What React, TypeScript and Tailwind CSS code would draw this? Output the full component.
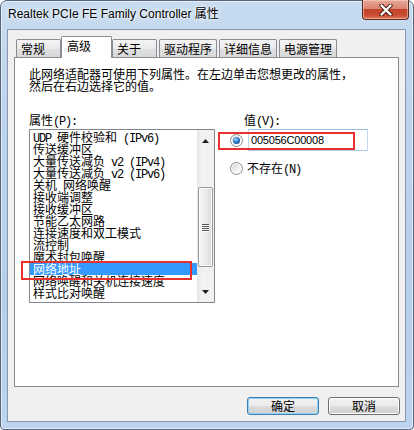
import React from "react";

function Mixed({ text }: { text: string }) {
  const parts = text.split(/([\x20-\x7E]+)/).filter((p) => p.length > 0);
  return (
    <>
      {parts.map((p, i) =>
        /^[\x20-\x7E]+$/.test(p) ? (
          <span key={i} className="font-['Liberation_Mono',monospace] text-[12px] tracking-[-1.2px] whitespace-pre">
            {p}
          </span>
        ) : (
          <span key={i}>{p}</span>
        )
      )}
    </>
  );
}

function Radio({ checked }: { checked?: boolean }) {
  return (
    <div className="w-[13px] h-[13px] shrink-0 rounded-full border border-[#8f8f8f] bg-[linear-gradient(135deg,#cfcfcf,#f4f4f4_60%,#ffffff)] shadow-[inset_0_0_0_1px_#fafafa] flex items-center justify-center">
      {checked && (
        <div className="w-[7px] h-[7px] rounded-full bg-[radial-gradient(circle_at_40%_35%,#9ad6ff,#2573c4_50%,#0d3a74)]" />
      )}
    </div>
  );
}

const items = [
  "UDP 硬件校验和 (IPv6)",
  "传送缓冲区",
  "大量传送减负 v2 (IPv4)",
  "大量传送减负 v2 (IPv6)",
  "关机 网络唤醒",
  "接收端调整",
  "接收缓冲区",
  "节能乙太网路",
  "连接速度和双工模式",
  "流控制",
  "魔术封包唤醒",
  "网络地址",
  "网络唤醒和关机连接速度",
  "样式比对唤醒",
];

const tabs = ["常规", "高级", "关于", "驱动程序", "详细信息", "电源管理"];
const tabW: Record<string, string> = {
  常规: "w-[45px]",
  关于: "w-[45px]",
  驱动程序: "w-[58px]",
  详细信息: "w-[58px]",
  电源管理: "w-[58px]",
};

export default function App() {
  return (
    <div className="w-[414px] h-[430px] bg-white overflow-hidden font-['Noto_Sans_CJK_SC',sans-serif] text-black">
      <div className="relative w-[414px] h-[430px] rounded-t-[7px] rounded-b-[4px] border border-[#56657a] bg-[linear-gradient(180deg,#c7dbf0,#bcd3ec_30%,#b6cfea_70%,#bcd4ed)] shadow-[inset_0_0_0_1px_rgba(255,255,255,0.55)] flex flex-col pl-[6px] pr-[7px]">
        <div className="h-[28px] flex items-center pl-[1px] pb-[2px]">
          <span className="font-['Liberation_Sans','Noto_Sans_CJK_SC',sans-serif] text-[12px] leading-[14px] whitespace-nowrap [text-shadow:0_0_6px_#ffffff,0_0_3px_#ffffff]">
            Realtek PCIe FE Family Controller 属性
          </span>
        </div>
        <div className="absolute top-[-1px] right-[4px] w-[47px] h-[20px] rounded-b-[4px] border border-[#5b2a22] border-t-0 bg-[linear-gradient(180deg,#e9a898,#d98672_45%,#c2432a_50%,#c94c32_80%,#e07a58)] shadow-[inset_0_0_0_1px_rgba(255,220,210,0.5)] flex items-center justify-center">
          <svg width="14" height="12" viewBox="0 0 14 12">
            <path d="M2.5 1.5 L11.5 10.5 M11.5 1.5 L2.5 10.5" stroke="#4a1a12" strokeWidth="4.2" strokeLinecap="round" />
            <path d="M2.5 1.5 L11.5 10.5 M11.5 1.5 L2.5 10.5" stroke="#ffffff" strokeWidth="2.4" strokeLinecap="round" />
          </svg>
        </div>

        <div className="w-[399px] h-[393px] border border-[#8897ac] bg-[#f0f0f0] flex flex-col">
          <div className="mt-[6px] h-[21px] flex items-end gap-[2px] pl-[8px] relative z-10">
            {tabs.map((t) =>
              t === "高级" ? (
                <div
                  key={t}
                  className="w-[51px] h-[22px] mx-[-2px] mb-[-1px] rounded-t-[2px] border border-b-0 border-[#898c95] bg-white pl-[5px] pt-[2px] text-[12px] leading-[14px]"
                >
                  {t}
                </div>
              ) : (
                <div
                  key={t}
                  className={`${tabW[t]} h-[18px] rounded-t-[2px] border border-b-0 border-[#898c95] bg-[linear-gradient(180deg,#f4f4f4,#ebebeb_50%,#e0e0e0_51%,#d9d9d9)] pl-[4px] pt-[2px] text-[12px] leading-[14px]`}
                >
                  {t}
                </div>
              )
            )}
          </div>

          <div className="relative ml-[6px] w-[385px] h-[330px] border border-[#898c95] bg-white pl-[14px] pt-[10px]">
            <div className="text-[12px] leading-[12px] whitespace-nowrap">
              此网络适配器可使用下列属性。在左边单击您想更改的属性，
              <br />
              然后在右边选择它的值。
            </div>

            <div className="mt-[22px] flex gap-[15px]">
              <div className="w-[186px] flex flex-col">
                <div className="h-[12px] text-[12px] leading-[12px] whitespace-nowrap">
                  <Mixed text="属性(P):" />
                </div>
                <div className="mt-[3px] w-[186px] h-[174px] border border-[#828790] bg-white flex">
                  <div className="flex-1 pt-[1px] flex flex-col">
                    {items.map((it) => (
                      <div
                        key={it}
                        className={`h-[12px] pl-[3px] text-[12px] leading-[12px] whitespace-nowrap ${
                          it === "网络地址" ? "bg-[#3399ff] text-white" : "text-black"
                        }`}
                      >
                        <Mixed text={it} />
                      </div>
                    ))}
                  </div>
                  <div className="w-[17px] h-full bg-[linear-gradient(90deg,#e6e6e6,#f2f2f2_30%,#f0f0f0)] flex flex-col">
                    <div className="h-[17px] flex items-center justify-center pt-[5px]">
                      <svg width="7" height="4" viewBox="0 0 7 4">
                        <path d="M3.5 0 L7 4 L0 4 Z" fill="#1e1e1e" />
                      </svg>
                    </div>
                    <div className="flex-1 flex flex-col">
                      <div className="mt-[40px] mx-[1px] h-[80px] rounded-[2px] border border-[#9a9a9a] bg-[linear-gradient(90deg,#f6f6f6,#ebebeb_50%,#d9d9d9)] shadow-[inset_0_0_0_1px_#fbfbfb] flex flex-col items-center justify-center gap-[1px]">
                        {[0, 1, 2, 3].map((g) => (
                          <div key={g} className="w-[7px] h-[1px] bg-[#555] shadow-[0_1px_0_#fff]" />
                        ))}
                      </div>
                    </div>
                    <div className="h-[17px] flex items-center justify-center pb-[3px]">
                      <svg width="7" height="4" viewBox="0 0 7 4">
                        <path d="M0 0 L7 0 L3.5 4 Z" fill="#1e1e1e" />
                      </svg>
                    </div>
                  </div>
                </div>
              </div>

              <div className="flex flex-col">
                <div className="h-[12px] pl-[14px] text-[12px] leading-[12px] whitespace-nowrap">
                  <Mixed text="值(V):" />
                </div>
                <div className="mt-[3px] h-[22px] flex items-center gap-[5px]">
                  <Radio checked />
                  <div className="w-[120px] h-[22px] border border-[#c3d6ea] border-t-[#9fbfde] border-b-[#aac8e4] bg-white pl-[2px] flex items-center">
                    <span className="font-['Liberation_Sans',sans-serif] text-[11px] leading-[12px] tracking-[-0.2px]">
                      005056C00008
                    </span>
                  </div>
                </div>
                <div className="mt-[11px] h-[13px] flex items-center gap-[4px]">
                  <Radio />
                  <span className="text-[12px] leading-[12px] whitespace-nowrap">
                    <Mixed text="不存在(N)" />
                  </span>
                </div>
              </div>
            </div>

            <div className="absolute left-[6px] top-[203px] w-[171px] h-[19px] border-2 border-[#e8302f]" />
            <div className="absolute left-[203px] top-[74px] w-[137px] h-[18px] border-2 border-[#e8302f]" />
          </div>

          <div className="mt-[10px] flex justify-end gap-[9px] pr-[5px]">
            <button className="w-[72px] h-[18px] rounded-[3px] border border-[#3c7fb1] bg-[linear-gradient(180deg,#f2f2f2,#ebebeb_50%,#dddddd_51%,#cfcfcf)] shadow-[inset_0_0_0_1px_#8fd3f6] text-[12px] leading-[12px] flex items-center justify-center">
              确定
            </button>
            <button className="w-[72px] h-[18px] rounded-[3px] border border-[#707070] bg-[linear-gradient(180deg,#f2f2f2,#ebebeb_50%,#dddddd_51%,#cfcfcf)] shadow-[inset_0_0_0_1px_#fcfcfc] text-[12px] leading-[12px] flex items-center justify-center">
              取消
            </button>
          </div>
        </div>
      </div>
    </div>
  );
}
